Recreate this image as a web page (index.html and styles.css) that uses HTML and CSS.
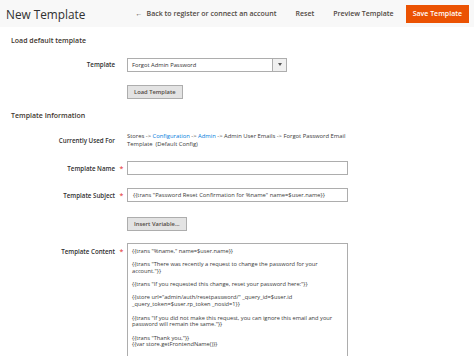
FILE: index.html
```html
<!DOCTYPE html>
<html>
<head>
<meta charset="utf-8">
<link rel="stylesheet" href="styles.css">
</head>
<body>
<header class="page-header">
  <h1 class="page-title">New Template</h1>
  <div class="page-actions">
    <a class="action back"><span class="arrow">&#8592;</span>Back to register or connect an account</a>
    <a class="action reset">Reset</a>
    <a class="action preview">Preview Template</a>
    <button class="action-primary">Save Template</button>
  </div>
</header>
<main class="content">
  <section class="fieldset">
    <h2 class="legend">Load default template</h2>
    <div class="field row-select">
      <label class="label">Template</label>
      <span class="req"></span>
      <div class="control">
        <div class="select"><span class="select-text">Forgot Admin Password</span><span class="select-arrow"><svg width="4" height="3" viewBox="0 0 4 3"><path d="M0 0h4L2 3z" fill="#555"/></svg></span></div>
      </div>
    </div>
    <div class="field row-btn1">
      <span class="label"></span>
      <span class="req"></span>
      <div class="control"><button class="btn">Load Template</button></div>
    </div>
  </section>
  <section class="fieldset">
    <h2 class="legend legend-2">Template Information</h2>
    <div class="field row-used">
      <label class="label label-top">Currently Used For</label>
      <span class="req"></span>
      <div class="control used-text"><div>Stores -&gt; <a class="link">Configuration</a> -&gt; <a class="link">Admin</a> -&gt; Admin User Emails -&gt; Forgot Password Email<br>Template &nbsp;(Default Config)</div></div>
    </div>
    <div class="field row-name">
      <label class="label">Template Name</label>
      <span class="req">*</span>
      <div class="control"><div class="input"></div></div>
    </div>
    <div class="field row-subject">
      <label class="label">Template Subject</label>
      <span class="req">*</span>
      <div class="control"><div class="input input-text">{{trans "Password Reset Confirmation for %name" name=$user.name}}</div></div>
    </div>
    <div class="field row-btn2">
      <span class="label"></span>
      <span class="req"></span>
      <div class="control"><button class="btn">Insert Variable...</button></div>
    </div>
    <div class="field row-content">
      <label class="label label-content">Template Content</label>
      <span class="req req-top">*</span>
      <div class="control"><div class="textarea">{{trans "%name," name=$user.name}}

{{trans "There was recently a request to change the password for your
account."}}

{{trans "If you requested this change, reset your password here:"}}

{{store url="admin/auth/resetpassword/" _query_id=$user.id
_query_token=$user.rp_token _nosid=1}}

{{trans "If you did not make this request, you can ignore this email and your
password will remain the same."}}

{{trans "Thank you,"}}
{{var store.getFrontendName()}}</div></div>
    </div>
  </section>
</main>
</body>
</html>
```
FILE: styles.css
```css
* { box-sizing: border-box; }
html, body { margin: 0; padding: 0; background: #fff; }
body {
  font-family: "Open Sans", "Liberation Sans", sans-serif;
  color: #303030;
  width: 474px;
  height: 356px;
  overflow: hidden;
}
.page-header {
  height: 27px;
  background: #f8f8f8;
  display: flex;
  align-items: center;
  justify-content: space-between;
}
.page-title {
  margin: 0 0 0 6px;
  font-size: 11.8px;
  font-weight: 400;
  color: #303030;
  line-height: 16px;
}
.page-actions {
  display: flex;
  align-items: center;
  margin-right: 5px;
}
.action {
  font-size: 7px;
  font-weight: 600;
  color: #514943;
  margin-left: 19px;
  white-space: nowrap;
}
.action.back { margin-left: 0; }
.arrow { margin-right: 4px; font-weight: 400; }
.action-primary {
  margin-left: 12px;
  height: 18px;
  padding: 0 7px;
  border: 0;
  background: #eb5202;
  color: #fff;
  font-family: inherit;
  font-size: 7px;
  font-weight: 600;
}
.content { padding-left: 11px; }
.fieldset { margin: 0; }
.legend {
  margin: 9px 0 0 0;
  font-size: 7px;
  line-height: 9px;
  font-weight: 600;
  color: #41362f;
}
.legend-2 { margin-top: 12px; }
.field {
  display: grid;
  grid-template-columns: 104px 12px 221px;
  align-items: center;
}
.control { display: flex; }
.label {
  text-align: right;
  font-size: 6.2px;
  font-weight: 600;
  color: #303030;
  line-height: 9px;
}
.label-top { align-self: start; padding-top: 2.5px; }
.label-content { align-self: start; padding-top: 3.5px; }
.req {
  color: #e22626;
  font-size: 7px;
  text-align: center;
  line-height: 9px;
  padding-left: 1px;
}
.req-top { align-self: start; padding-top: 3.5px; }
.row-select { margin-top: 12.5px; }
.row-btn1 { margin-top: 13px; }
.row-used { margin-top: 13.5px; align-items: start; }
.row-name { margin-top: 13px; }
.row-subject { margin-top: 13px; }
.row-btn2 { margin-top: 15px; }
.row-content { margin-top: 12px; align-items: start; }
.select {
  width: 160px;
  height: 14px;
  border: 1px solid #adadad;
  background: #fff;
  display: flex;
  align-items: center;
}
.select-text {
  flex: 1;
  padding-left: 4px;
  font-size: 5.8px;
  color: #303030;
}
.select-arrow {
  width: 14px;
  height: 12px;
  border-left: 1px solid #adadad;
  background: #f0f0f0;
  display: flex;
  align-items: center;
  justify-content: center;
}
.btn {
  height: 14px;
  padding: 0 6px;
  background: #e3e3e3;
  border: 1px solid #adadad;
  font-family: inherit;
  font-size: 5.8px;
  font-weight: 600;
  color: #514943;
}
.used-text {
  font-size: 5.85px;
  line-height: 7.5px;
  color: #3a3a3a;
  white-space: nowrap;
}
.link { color: #007bdb; }
.input {
  width: 221px;
  height: 14px;
  border: 1px solid #adadad;
  background: #fff;
}
.input-text {
  font-size: 5.8px;
  line-height: 12px;
  padding-left: 5px;
  color: #3a3a3a;
  white-space: nowrap;
}
.textarea {
  width: 221px;
  height: 130px;
  border: 1px solid #adadad;
  background: #fff;
  padding: 3.5px 4px;
  font-size: 5.7px;
  line-height: 6.7px;
  white-space: pre;
  color: #3a3a3a;
  overflow: hidden;
}
```
